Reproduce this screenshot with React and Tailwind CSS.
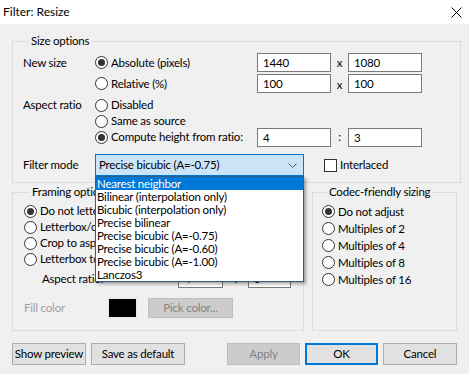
import React from 'react';

const Radio = ({ checked, children }) => (
  <div className="flex items-center gap-[3px] whitespace-nowrap">
    <span className="w-[13px] h-[13px] shrink-0 rounded-full border border-[#333333] bg-white flex items-center justify-center">
      {checked && <span className="w-[7px] h-[7px] rounded-full bg-[#333333]" />}
    </span>
    <span>{children}</span>
  </div>
);

const Field = ({ value, className = 'w-[74px]' }) => (
  <div className={`${className} h-[19px] border border-[#7a7a7a] bg-white pl-[5px] leading-[17px]`}>{value}</div>
);

const Button = ({ children, className = '' }) => (
  <div className={`h-[22px] border border-[#adadad] bg-[#e1e1e1] flex items-center justify-center whitespace-nowrap ${className}`}>
    {children}
  </div>
);

const filterModes = [
  'Nearest neighbor',
  'Bilinear (interpolation only)',
  'Bicubic (interpolation only)',
  'Precise bilinear',
  'Precise bicubic (A=-0.75)',
  'Precise bicubic (A=-0.60)',
  'Precise bicubic (A=-1.00)',
  'Lanczos3',
];

export default function App() {
  return (
    <div className="w-[469px] h-[374px] bg-[#f0f0f0] text-[11.5px] tracking-[-0.2px] text-black font-['Lato',sans-serif] overflow-hidden">
      {/* title bar */}
      <div className="h-[24px] bg-white flex items-center justify-between pl-[3px] pr-[7px] text-[12px] tracking-normal">
        <span>Filter: Resize</span>
        <svg width="11" height="11" viewBox="0 0 11 11">
          <path d="M0.5 0.5 L10.5 10.5 M10.5 0.5 L0.5 10.5" stroke="#000" strokeWidth="1" fill="none" />
        </svg>
      </div>

      <div className="px-[12px]">
        {/* Size options */}
        <fieldset className="mt-[9px] w-[449px] border border-[#dcdcdc] pl-[10px] pb-[6px]">
          <legend className="ml-[6px] px-[2px] leading-[16px]">Size options</legend>
          <div className="pt-[3px]">
            <div className="flex items-center h-[21px]">
              <span className="w-[72px]">New size</span>
              <div className="w-[162px]"><Radio checked>Absolute (pixels)</Radio></div>
              <Field value="1440" />
              <span className="w-[17px] text-center">x</span>
              <Field value="1080" />
            </div>
            <div className="flex items-center h-[21px]">
              <span className="w-[72px]" />
              <div className="w-[162px]"><Radio>Relative (%)</Radio></div>
              <Field value="100" />
              <span className="w-[17px] text-center pt-[3px]">x</span>
              <Field value="100" />
            </div>
            <div className="flex items-center h-[16px] mt-[3px]">
              <span className="w-[72px]">Aspect ratio</span>
              <Radio>Disabled</Radio>
            </div>
            <div className="flex items-center h-[16px]">
              <span className="w-[72px]" />
              <Radio>Same as source</Radio>
            </div>
            <div className="flex items-center h-[16px]">
              <span className="w-[72px]" />
              <div className="w-[162px]"><Radio checked>Compute height from ratio:</Radio></div>
              <Field value="4" />
              <span className="w-[17px] text-center">:</span>
              <Field value="3" />
            </div>
            <div className="flex items-center h-[22px] mt-[9px]">
              <span className="w-[72px]">Filter mode</span>
              <div className="relative">
                <div className="w-[209px] h-[22px] border border-[#0078d7] bg-[#cce4f7] flex items-center justify-between pl-[3px] pr-[6px]">
                  <span>Precise bicubic (A=-0.75)</span>
                  <svg width="9" height="5" viewBox="0 0 9 5">
                    <path d="M0.5 0.5 L4.5 4.5 L8.5 0.5" stroke="#606060" fill="none" />
                  </svg>
                </div>
                {/* open drop-down list */}
                <div className="absolute left-0 top-full w-[209px] h-[106px] z-10 bg-white border border-[#2d5f88] shadow-[2px_2px_3px_rgba(0,0,0,0.35)]">
                  {filterModes.map((m, i) => (
                    <div
                      key={m}
                      className={`h-[13px] leading-[13px] pl-[1px] whitespace-nowrap ${i === 0 ? 'bg-[#0078d7] text-white' : ''}`}
                    >
                      {m}
                    </div>
                  ))}
                </div>
              </div>
              <div className="ml-[20px] flex items-center gap-[3px]">
                <span className="w-[13px] h-[13px] border border-[#333333] bg-white" />
                <span>Interlaced</span>
              </div>
            </div>
          </div>
        </fieldset>

        <div className="flex justify-between mt-[1px]">
          {/* Framing options */}
          <fieldset className="w-[292px] h-[147px] border border-[#dcdcdc] pl-[11px]">
            <legend className="ml-[6px] px-[2px] leading-[16px]">Framing options</legend>
            <div className="pt-[3px]">
              <div className="h-[16px] flex items-center"><Radio checked>Do not letterbox or crop</Radio></div>
              <div className="h-[16px] flex items-center"><Radio>Letterbox/crop to size</Radio></div>
              <div className="h-[16px] flex items-center"><Radio>Crop to aspect ratio</Radio></div>
              <div className="h-[16px] flex items-center"><Radio>Letterbox to aspect ratio</Radio></div>
              <div className="h-[19px] mt-[2px] flex items-center">
                <span className="w-[136px] ml-[18px]">Aspect ratio:</span>
                <Field value="4" className="w-[45px]" />
                <span className="w-[25px] text-center">:</span>
                <Field value="3" className="w-[43px]" />
              </div>
              <div className="h-[20px] mt-[10px] flex items-center">
                <span className="w-[84px] text-[#a0a0a0]">Fill color</span>
                <span className="w-[29px] h-[20px] bg-black border border-[#e6e6e6]" />
                <div className="ml-[11px] w-[85px] h-[20px] bg-[#cccccc] border border-[#bfbfbf] text-[#838383] flex items-center justify-center">
                  Pick color...
                </div>
              </div>
            </div>
          </fieldset>

          {/* Codec-friendly sizing */}
          <fieldset className="w-[145px] h-[147px] border border-[#dcdcdc] pl-[9px]">
            <legend className="ml-[5px] px-[2px] leading-[16px]">Codec-friendly sizing</legend>
            <div className="pt-[3px]">
              <div className="h-[17px] flex items-center"><Radio checked>Do not adjust</Radio></div>
              <div className="h-[17px] flex items-center"><Radio>Multiples of 2</Radio></div>
              <div className="h-[17px] flex items-center"><Radio>Multiples of 4</Radio></div>
              <div className="h-[17px] flex items-center"><Radio>Multiples of 8</Radio></div>
              <div className="h-[17px] flex items-center"><Radio>Multiples of 16</Radio></div>
            </div>
          </fieldset>
        </div>

        {/* buttons */}
        <div className="flex items-center mt-[12px]">
          <Button className="w-[74px]">Show preview</Button>
          <Button className="w-[94px] ml-[5px]">Save as default</Button>
          <div className="flex-1" />
          <div className="w-[73px] h-[22px] border border-[#bfbfbf] bg-[#cccccc] text-[#838383] flex items-center justify-center">Apply</div>
          <div className="w-[73px] h-[22px] ml-[5px] border-2 border-[#0078d7] bg-[#e1e1e1] flex items-center justify-center">OK</div>
          <Button className="w-[74px] ml-[5px]">Cancel</Button>
        </div>
      </div>
    </div>
  );
}
